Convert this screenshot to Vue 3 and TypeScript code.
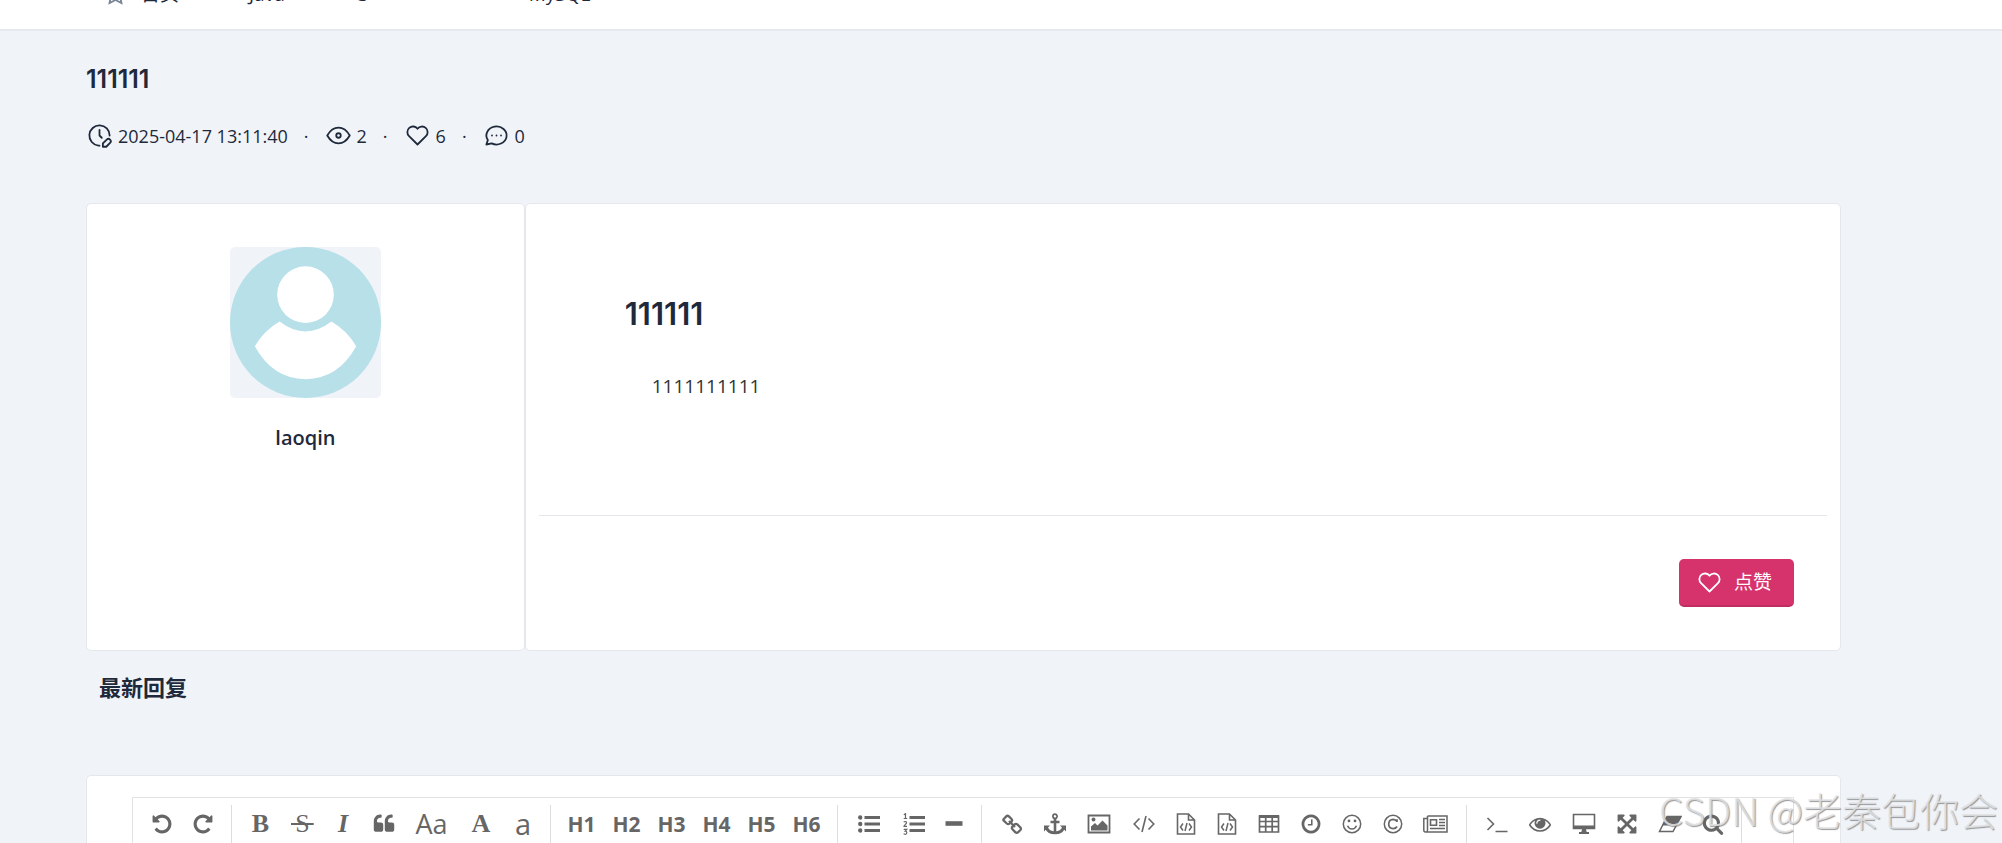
<script setup lang="ts">
interface Shape {
  d: string
  line?: number
}
interface Tool {
  title: string
  size: number
  text?: string
  look?: string
  box?: string
  flip?: boolean
  shapes?: Shape[]
}

const undoPath =
  'M1664 896q0 156-61 298t-164 245-245 164-298 61q-172 0-327-72.5t-264-204.5q-7-10-6.5-22.5t8.5-20.5l137-138q10-9 25-9 16 2 23 12 73 95 179 147t225 52q104 0 198.5-40.5t163.5-109.5 109.5-163.5 40.5-198.5-40.5-198.5-109.5-163.5-163.5-109.5-198.5-40.5q-98 0-188 35.5t-160 101.5l137 138q31 30 14 69-17 40-59 40h-448q-26 0-45-19t-19-45v-448q0-42 40-59 39-17 69 14l130 129q107-101 244.5-156.5t284.5-55.5q156 0 298 61t245 164 164 245 61 298z'
const fa = '0 0 1792 1792'
const px = '0 0 22 22'

const fileShapes: Shape[] = [
  { d: 'M2.500 1h11l6 6v14h-17z M13.500 1v6h6', line: 1.6 },
  { d: 'M8 10.500l-2.500 3.500 2.500 3.500 M14 10.500l2.500 3.500-2.500 3.500 M12 10l-2 8', line: 1.5 },
]

const groups: Tool[][] = [
  [
    { title: 'Undo', size: 41, box: fa, shapes: [{ d: undoPath }] },
    { title: 'Redo', size: 41, box: fa, flip: true, shapes: [{ d: undoPath }] },
  ],
  [
    { title: 'Bold', size: 41, text: 'B', look: 'serif strong' },
    { title: 'Strikethrough', size: 43, text: 'S', look: 'serif strike' },
    { title: 'Italic', size: 38, text: 'I', look: 'serif strong italic' },
    {
      title: 'Quote', size: 43, box: fa,
      shapes: [{ d: 'M832 960v384q0 80-56 136t-136 56h-384q-80 0-136-56t-56-136v-704q0-104 40.5-198.5t109.5-163.5 163.5-109.500 198.500-40.500h64q26 0 45 19t19 45v128q0 26-19 45t-45 19h-64q-106 0-181 75t-75 181v32q0 40 28 68t68 28h224q80 0 136 56t56 136zm896 0v384q0 80-56 136t-136 56h-384q-80 0-136-56t-56-136v-704q0-104 40.500-198.500t109.500-163.500 163.500-109.500 198.500-40.500h64q26 0 45 19t19 45v128q0 26-19 45t-45 19h-64q-106 0-181 75t-75 181v32q0 40 28 68t68 28h224q80 0 136 56t56 136z' }],
    },
    { title: 'Capitalize words', size: 53, text: 'Aa', look: 'letters' },
    { title: 'Uppercase', size: 46, text: 'A', look: 'serif strong' },
    { title: 'Lowercase', size: 38, text: 'a', look: 'letters single' },
  ],
  [1, 2, 3, 4, 5, 6].map((n) => ({ title: 'Heading ' + n, size: 45, text: 'H' + n, look: 'heading' })),
  [
    {
      title: 'Unordered list', size: 46, box: px,
      shapes: [
        { d: 'M6.500 4.500H22 M6.500 11H22 M6.500 17.500H22', line: 2.800 },
        { d: 'M2.200 2.300a2.200 2.200 0 1 1 0 4.400a2.200 2.200 0 1 1 0-4.400z M2.200 8.800a2.200 2.200 0 1 1 0 4.400a2.200 2.200 0 1 1 0-4.400z M2.200 15.300a2.200 2.200 0 1 1 0 4.400a2.200 2.200 0 1 1 0-4.400z' },
      ],
    },
    {
      title: 'Ordered list', size: 43, box: px,
      shapes: [
        { d: 'M6.500 4.500H22 M6.500 11H22 M6.500 17.500H22', line: 2.800 },
        { d: 'M.8 1.800L2.500.7V5.500 M.7 5.500H4.200 M.8 9.300C1.500 8 3.800 8.300 3.500 10C3.200 11.200 1 12.200 1 13.300H4 M.7 16.400H3.800L2.200 18.200C4.500 18.200 4.200 21.300 2.200 21.300C1.500 21.300 1 21.100.6 20.700', line: 1.200 },
      ],
    },
    { title: 'Horizontal rule', size: 38, box: px, shapes: [{ d: 'M2.500 8.200h17v4.600h-17z' }] },
  ],
  [
    {
      title: 'Link', size: 43, box: px,
      shapes: [
        { d: 'M2.600 6.200L5.200 3.400Q6.500 2.200 7.900 3.400L10.500 6Q11.700 7.300 10.500 8.700L8.600 10.500Q7.200 11.700 5.800 10.500L2.800 7.700Q2 7 2.600 6.200z M11.500 13.500L13.600 11.400Q15 10.300 16.300 11.400L19.400 14.500Q20.400 15.800 19.400 17L17 19.300Q15.700 20.300 14.400 19.300L11.500 16.300Q10.300 14.900 11.500 13.500z M8 8L14 14', line: 2.300 },
      ],
    },
    {
      title: 'Anchor', size: 43, box: px,
      shapes: [
        { d: 'M11 1.200a2.100 2.100 0 1 1 0 4.200a2.100 2.100 0 1 1 0-4.200z', line: 1.700 },
        { d: 'M11 5v15 M6.500 9h9', line: 2.600 },
        { d: 'M2.500 14.500C3.500 18 7 19.800 11 19.800S18.500 18 19.500 14.500', line: 2.800 },
        { d: 'M0 12.500h6l-6 6z M22 12.500h-6l6 6z' },
      ],
    },
    {
      title: 'Image', size: 46, box: '0 0 24 22',
      shapes: [
        { d: 'M1.500 2.500h21v17h-21z', line: 1.800 },
        { d: 'M4 17.500v-4l4-3.500 2.500 2.500L15.500 7.500l5 5v5z M6.500 4.500a2 2 0 1 1 0 4a2 2 0 1 1 0-4z' },
      ],
    },
    { title: 'Code', size: 43, box: px, shapes: [{ d: 'M6.500 5.500L1.200 11l5.300 5.500 M15.500 5.500l5.300 5.500-5.300 5.500 M13 3L9 19', line: 1.600 }] },
    { title: 'Preformatted text', size: 41, box: px, shapes: fileShapes },
    { title: 'Code block', size: 41, box: px, shapes: fileShapes },
    { title: 'Table', size: 43, box: px, shapes: [{ d: 'M1.500 3h19v16h-19z M1.500 8.500h19 M1.500 13.700h19 M7.700 3v16 M14.200 3v16', line: 1.700 }, { d: 'M1 2h20v3H1z' }] },
    {
      title: 'Date and time', size: 41, box: fa,
      shapes: [{ d: 'M1024 544v448q0 14-9 23t-23 9h-320q-14 0-23-9t-9-23v-64q0-14 9-23t23-9h224v-352q0-14 9-23t23-9h64q14 0 23 9t9 23zm416 352q0-148-73-273t-198-198-273-73-273 73-198 198-73 273 73 273 198 198 273 73 273-73 198-198 73-273zm224 0q0 209-103 385.500t-279.500 279.500-385.500 103-385.500-103-279.500-279.500-103-385.500 103-385.500 279.500-279.500 385.500-103 385.500 103 279.500 279.500 103 385.500z' }],
    },
    {
      title: 'Emoji', size: 41, box: px,
      shapes: [
        { d: 'M11 2.300a8.700 8.700 0 1 1 0 17.400a8.700 8.700 0 1 1 0-17.400z M6.500 12.800Q7.800 16 11 16T15.500 12.800', line: 1.500 },
        { d: 'M8 6.500a1.400 1.400 0 1 1 0 2.800a1.400 1.400 0 1 1 0-2.800z M14 6.500a1.400 1.400 0 1 1 0 2.800a1.400 1.400 0 1 1 0-2.800z' },
      ],
    },
    {
      title: 'HTML entities', size: 41, box: px,
      shapes: [
        { d: 'M11 2.300a8.700 8.700 0 1 1 0 17.400a8.700 8.700 0 1 1 0-17.400z', line: 1.500 },
        { d: 'M15 8.500Q13.800 6.300 11.200 6.300Q6.800 6.600 6.700 11T11.200 15.700Q13.800 15.700 15 13.500 M15 6.300v2.700', line: 1.700 },
      ],
    },
    {
      title: 'Page break', size: 45, box: '0 0 25 22',
      shapes: [
        { d: 'M4.500 3h19.500v16H2.500Q.8 19 .8 17V5.500h3.500 M4.500 3v14.500Q4.300 19 2.500 19', line: 1.500 },
        { d: 'M7.500 6.700h6v5.500h-6z M16 6.500h6 M16 9.500h6 M16 12.500h6 M7 15.500h15', line: 1.600 },
      ],
    },
  ],
  [
    { title: 'Go to line', size: 43, box: px, shapes: [{ d: 'M1.500 5l6 6-6 6 M9.500 18.500h12', line: 1.600 }] },
    {
      title: 'Unwatch', size: 43, box: fa,
      shapes: [{ d: 'M1664 960q-152-236-381-353 61 104 61 225 0 185-131.500 316.500t-316.500 131.500-316.500-131.500-131.500-316.500q0-121 61-225-229 117-381 353 133 205 333.500 326.500t434.500 121.500 434.500-121.500 333.500-326.500zm-720-384q0-20-14-34t-34-14q-125 0-214.500 89.500t-89.500 214.500q0 20 14 34t34 14 34-14 14-34q0-86 61-147t147-61q20 0 34-14t14-34zm848 384q0 34-20 69-140 230-376.500 368.500t-499.500 138.500-499.500-139-376.500-368q-20-35-20-69t20-69q140-229 376.500-368t499.500-139 499.500 139 376.500 368q20 35 20 69z' }],
    },
    {
      title: 'HTML preview', size: 45, box: '0 0 24 22',
      shapes: [{ d: 'M1.500 1.500h21v14h-21z', line: 1.600 }, { d: 'M1 12.500h22v3.500H1z M10 16h4l.6 3H17v2H7v-2h2.400z' }],
    },
    {
      title: 'Fullscreen', size: 41, box: fa,
      shapes: [{ d: 'M1411 541l-355 355 355 355 144-144q29-31 70-14 39 17 39 59v448q0 26-19 45t-45 19h-448q-42 0-59-40-17-39 14-69l144-144-355-355-355 355 144 144q31 30 14 69-17 40-59 40h-448q-26 0-45-19t-19-45v-448q0-42 40-59 39-17 69 14l144 144 355-355-355-355-144 144q-19 19-45 19-12 0-24-5-40-17-40-59v-448q0-26 19-45t45-19h448q42 0 59 40 17 39-14 69l-144 144 355 355 355-355-144-144q-31-30-14-69 17-40 59-40h448q26 0 45 19t19 45v448q0 42-39 59-13 5-25 5-26 0-45-19z' }],
    },
    {
      title: 'Clear', size: 45, box: '0 0 24 22',
      shapes: [{ d: 'M9 3.500h14L15 18.500H1.500z', line: 1.500 }, { d: 'M9 3h14.800L18.600 12.500H4z' }],
    },
    {
      title: 'Search', size: 41, box: fa,
      shapes: [{ d: 'M1216 832q0-185-131.500-316.500t-316.500-131.500-316.500 131.500-131.500 316.500 131.500 316.500 316.500 131.500 316.500-131.500 131.500-316.500zm512 832q0 52-38 90t-90 38q-54 0-90-38l-343-342q-179 124-399 124-143 0-273.500-55.500t-225-150-150-225-55.500-273.500 55.500-273.500 150-225 225-150 273.500-55.500 273.500 55.500 225 150 150 225 55.500 273.500q0 220-124 399l343 343q37 37 37 90z' }],
    },
  ],
]

const heart = 'M19.500 12.572l-7.500 7.428l-7.500 -7.428a5 5 0 1 1 7.500 -6.566a5 5 0 1 1 7.500 6.572'
const navItems = ['Java', 'C', 'MySQL']
</script>

<template>
  <div class="page">
    <header class="topbar">
      <nav class="nav">
        <a class="nav-link home" href="#">
          <svg class="star" viewBox="0 0 24 24"><path d="M12 17.750l-6.172 3.245l1.179 -6.873l-5 -4.867l6.900 -1l3.086 -6.253l3.086 6.253l6.900 1l-5 4.867l1.179 6.873z" /></svg>
          首页
        </a>
        <a v-for="item in navItems" :key="item" class="nav-link" href="#">{{ item }}</a>
      </nav>
    </header>

    <main class="content">
      <h2 class="title">111111</h2>
      <div class="meta">
        <svg class="ico" viewBox="0 0 24 24"><path d="M21 12a9 9 0 1 0 -9.972 8.948c.32 .034 .644 .052 .972 .052" /><path d="M12 7v5l2 2" /><path d="M18.420 15.610a2.100 2.100 0 0 1 2.970 2.970l-3.390 3.420h-3v-3l3.420 -3.390z" /></svg>
        <span>2025-04-17 13:11:40</span>
        <span class="dot">·</span>
        <svg class="ico" viewBox="0 0 24 24"><path d="M10 12a2 2 0 1 0 4 0a2 2 0 0 0 -4 0" /><path d="M22 12c-2.667 4.667 -6 7 -10 7s-7.333 -2.333 -10 -7c2.667 -4.667 6 -7 10 -7s7.333 2.333 10 7" /></svg>
        <span>2</span>
        <span class="dot">·</span>
        <svg class="ico" viewBox="0 0 24 24"><path :d="heart" /></svg>
        <span>6</span>
        <span class="dot">·</span>
        <svg class="ico" viewBox="0 0 24 24"><path d="M3 20l1.300 -3.900a9 8 0 1 1 3.400 2.900l-4.700 1" /><path d="M12 12v.01M8 12v.01M16 12v.01" /></svg>
        <span>0</span>
      </div>

      <div class="post">
        <aside class="card author">
          <svg class="avatar" viewBox="0 0 152 152">
            <circle cx="76" cy="76" r="76" fill="#b7e0e9" />
            <circle cx="76" cy="48" r="28.500" fill="#fff" />
            <path d="M50 75Q76 95 102 75Q118 84 127 100Q109 133 76 133T25 100Q34 84 50 75z" fill="#fff" />
          </svg>
          <h3 class="name">laoqin</h3>
        </aside>
        <article class="card article">
          <div class="body">
            <h1 class="headline">111111</h1>
            <p class="text">1111111111</p>
          </div>
          <div class="actions">
            <button class="like" type="button">
              <svg class="ico" viewBox="0 0 24 24"><path :d="heart" /></svg>
              点赞
            </button>
          </div>
        </article>
      </div>

      <h3 class="replies">最新回复</h3>

      <section class="card reply">
        <div class="editor">
          <div class="toolbar">
            <div v-for="(group, g) in groups" :key="g" class="group">
              <button v-for="tool in group" :key="tool.title" type="button" :class="['tool', 'w' + tool.size]" :aria-label="tool.title">
                <span v-if="tool.text" :class="tool.look">{{ tool.text }}</span>
                <svg v-else :class="['glyph', { flip: tool.flip }]" :viewBox="tool.box">
                  <path v-for="(s, i) in tool.shapes" :key="i" :d="s.d" :fill="s.line ? 'none' : 'currentColor'" :stroke="s.line ? 'currentColor' : 'none'" :stroke-width="s.line" />
                </svg>
              </button>
            </div>
          </div>
        </div>
      </section>
    </main>

    <div class="watermark">CSDN @老秦包你会</div>
  </div>
</template>

<style>
body {
  margin: 0;
}
</style>

<style scoped>
.page {
  position: relative;
  height: 100vh;
  overflow: hidden;
  background: #f0f4f9;
  color: #1e293b;
  font-family: "Open Sans", "Noto Sans", "Noto Sans CJK SC", sans-serif;
  font-size: 18px;
  line-height: 26px;
}
* {
  box-sizing: border-box;
}
h1,
h2,
h3,
p {
  margin: 0;
}
.topbar {
  display: flex;
  align-items: flex-end;
  height: 31px;
  overflow: hidden;
  padding: 0 86px 22px 104px;
  background: #fff;
  border-bottom: 2px solid #e6e9ed;
}
.nav {
  display: flex;
  gap: 70px;
  font-size: 19px;
}
.nav-link {
  display: flex;
  align-items: center;
  gap: 14px;
  color: inherit;
  text-decoration: none;
}
.nav-link:nth-child(3) {
  width: 104px;
}
.star {
  width: 23px;
  height: 23px;
  fill: none;
  stroke: #7b8698;
  stroke-width: 2;
}
.content {
  padding: 31px 161px 0 86px;
}
.title {
  font-family: Inter, sans-serif;
  font-size: 25px;
  font-weight: 600;
  line-height: 34px;
}
.meta {
  display: flex;
  align-items: center;
  gap: 5px;
  margin-top: 26px;
}
.ico {
  flex: none;
  width: 27px;
  height: 27px;
  fill: none;
  stroke: currentColor;
  stroke-width: 1.6;
  stroke-linecap: round;
  stroke-linejoin: round;
}
.dot {
  margin: 0 11px;
}
.card {
  background: #fff;
  border: 1px solid #e4e7eb;
  border-radius: 5px;
}
.post {
  display: flex;
  margin-top: 54px;
}
.author {
  width: 25%;
  padding: 43px 20px;
  text-align: center;
}
.avatar {
  display: block;
  width: 151px;
  height: 151px;
  margin: 0 auto;
  border-radius: 5px;
  background: #f0f4f9;
}
.name {
  margin-top: 27px;
  font-size: 20px;
  font-weight: 600;
}
.article {
  flex: 1;
  padding: 0 13px;
}
.body {
  padding: 90px 86px 112px;
  border-bottom: 1px solid #e4e7eb;
}
.headline {
  font-family: Inter, sans-serif;
  font-size: 31px;
  font-weight: 600;
  line-height: 40px;
}
.text {
  margin-top: 36px;
  padding-left: 27px;
  color: #333;
  font-size: 19px;
  line-height: 33px;
}
.actions {
  display: flex;
  justify-content: flex-end;
  padding: 43px 33px;
}
.like {
  display: flex;
  align-items: center;
  gap: 11px;
  height: 48px;
  padding: 0 22px 0 17px;
  border: 0;
  border-bottom: 2px solid #c02e61;
  border-radius: 5px;
  background: #d6336c;
  color: #fff;
  font: inherit;
  font-size: 19px;
}
.replies {
  margin: 21px 0 73px 13px;
  font-size: 22px;
  font-weight: 700;
  line-height: 30px;
}
.reply {
  padding: 21px 46px 40px 45px;
}
.editor {
  border: 1px solid #e2e2e2;
}
.toolbar {
  display: flex;
  padding: 7px 8px;
}
.group {
  display: flex;
  margin-right: 8px;
  padding-right: 8px;
  border-right: 1px solid #ddd;
}
.tool {
  display: flex;
  align-items: center;
  justify-content: center;
  height: 38px;
  padding: 0;
  border: 0;
  background: none;
  color: #666;
  font: inherit;
}
.w38 { width: 38px; }
.w41 { width: 41px; }
.w43 { width: 43px; }
.w45 { width: 45px; }
.w46 { width: 46px; }
.w53 { width: 53px; }
.glyph {
  height: 22px;
}
.flip {
  transform: scaleX(-1);
}
.serif {
  font-family: "Liberation Serif", serif;
  font-size: 26px;
}
.strong {
  font-weight: 700;
}
.italic {
  font-style: italic;
}
.strike {
  padding: 0 4px;
  background: linear-gradient(#666, #666) center / 100% 2px no-repeat;
}
.letters {
  font-size: 27px;
}
.single {
  font-size: 29px;
  font-weight: 500;
}
.heading {
  font-size: 21px;
  font-weight: 700;
}
.watermark {
  position: absolute;
  right: 4px;
  bottom: 8px;
  color: rgba(225, 226, 228, 0.85);
  font-family: "Noto Sans CJK SC", sans-serif;
  font-size: 39px;
  font-weight: 300;
  line-height: 52px;
  text-shadow: 1px 1px 1px rgba(110, 110, 110, 0.7);
}
</style>
